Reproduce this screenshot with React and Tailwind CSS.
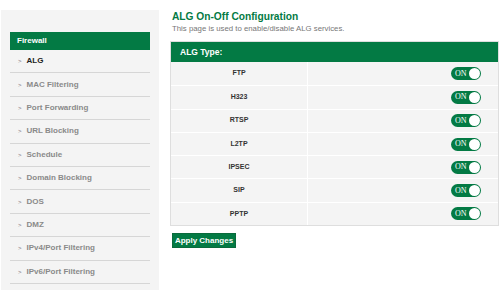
import React from "react";

const menu = [
  "ALG",
  "MAC Filtering",
  "Port Forwarding",
  "URL Blocking",
  "Schedule",
  "Domain Blocking",
  "DOS",
  "DMZ",
  "IPv4/Port Filtering",
  "IPv6/Port Filtering",
];

const algs = ["FTP", "H323", "RTSP", "L2TP", "IPSEC", "SIP", "PPTP"];

function Toggle() {
  return (
    <div className="flex items-center justify-between w-[30px] h-[13px] rounded-full bg-[#037a44] pl-[4px] pr-[1px]">
      <span className="text-[8px] leading-none text-white font-['Liberation_Serif',serif]">
        ON
      </span>
      <span className="w-[11px] h-[11px] rounded-full bg-white" />
    </div>
  );
}

export default function App() {
  return (
    <div className="flex w-full h-[290px] bg-white overflow-hidden font-['Liberation_Sans',Arial,sans-serif]">
      {/* sidebar */}
      <div className="ml-[1px] mt-[10px] w-[158px] shrink-0 bg-[#f4f4f4] px-[9px] pt-[22px]">
        <div className="h-[18px] bg-[#037a44] flex items-center pl-[7px] text-[8px] font-bold text-white">
          Firewall
        </div>
        {menu.map((m, i) => (
          <div
            key={m}
            className="h-[23.4px] border-b border-[#d6d6d6] flex items-center pl-[8px]"
          >
            <span className="text-[6px] text-[#777] mr-[5px] leading-none">&gt;</span>
            <span
              className={`text-[8px] font-bold ${
                i === 0 ? "text-[#222]" : "text-[#8a8a8a]"
              }`}
            >
              {m}
            </span>
          </div>
        ))}
      </div>

      {/* main */}
      <div className="ml-[11px] flex-1 pr-[1px] pt-[10px]">
        <h1 className="pl-[2px] text-[10.2px] leading-[13px] font-bold text-[#037a44]">
          ALG On-Off Configuration
        </h1>
        <p className="pl-[2px] text-[7.8px] leading-[11px] text-[#777]">
          This page is used to enable/disable ALG services.
        </p>

        <div className="mt-[7px] border border-[#dedede]">
          <div className="h-[20px] bg-[#037a44] flex items-center pl-[9px] text-[8.5px] font-bold text-white">
            ALG Type:
          </div>
          {algs.map((a, i) => (
            <div
              key={a}
              className={`flex h-[23.3px] bg-[#f4f4f4] ${
                i > 0 ? "border-t border-white" : ""
              }`}
            >
              <div className="w-[137px] flex items-center justify-center border-r border-white text-[7px] font-bold text-[#333]">
                {a}
              </div>
              <div className="flex-1 flex items-center justify-end pr-[17px]">
                <Toggle />
              </div>
            </div>
          ))}
        </div>

        <button className="mt-[7px] ml-[2px] w-[64px] h-[15px] bg-[#037a44] text-white text-[8px] font-bold flex items-center justify-center border border-[#0a6a3c]">
          Apply Changes
        </button>
      </div>
    </div>
  );
}
